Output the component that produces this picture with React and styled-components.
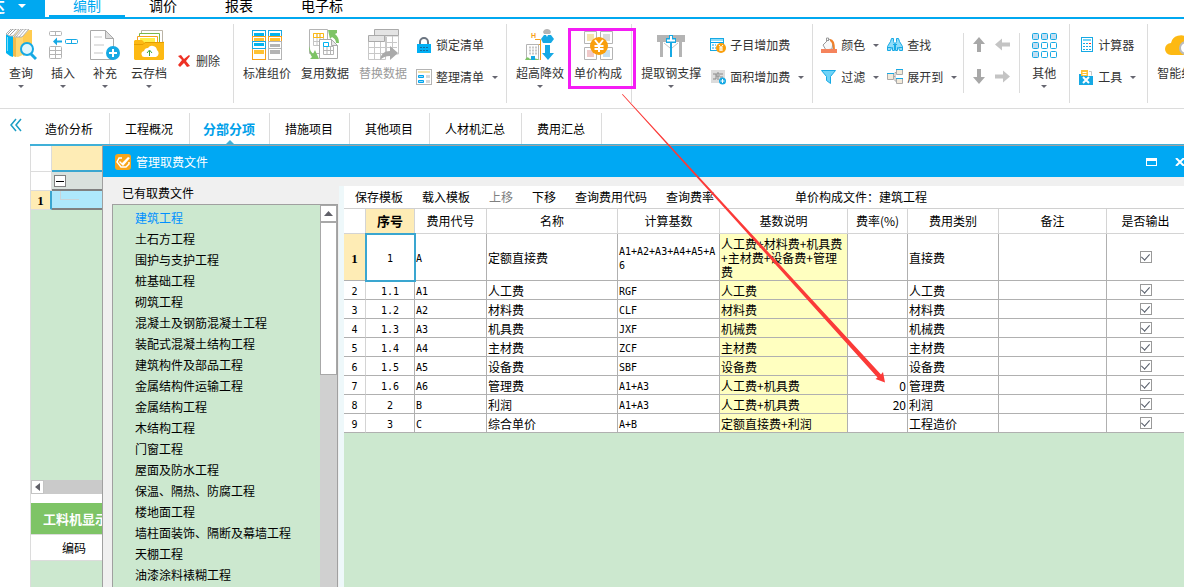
import React, { useState } from 'react'
import styled, { createGlobalStyle, css } from 'styled-components'

const feeFiles = [
  '建筑工程',
  '土石方工程',
  '围护与支护工程',
  '桩基础工程',
  '砌筑工程',
  '混凝土及钢筋混凝土工程',
  '装配式混凝土结构工程',
  '建筑构件及部品工程',
  '金属结构件运输工程',
  '金属结构工程',
  '木结构工程',
  '门窗工程',
  '屋面及防水工程',
  '保温、隔热、防腐工程',
  '楼地面工程',
  '墙柱面装饰、隔断及幕墙工程',
  '天棚工程',
  '油漆涂料裱糊工程',
]

const feeRows = [
  { no: '1', code: 'A', name: '定额直接费', base: 'A1+A2+A3+A4+A5+A6', desc: '人工费+材料费+机具费+主材费+设备费+管理费', rate: '', type: '直接费' },
  { no: '1.1', code: 'A1', name: '人工费', base: 'RGF', desc: '人工费', rate: '', type: '人工费' },
  { no: '1.2', code: 'A2', name: '材料费', base: 'CLF', desc: '材料费', rate: '', type: '材料费' },
  { no: '1.3', code: 'A3', name: '机具费', base: 'JXF', desc: '机械费', rate: '', type: '机械费' },
  { no: '1.4', code: 'A4', name: '主材费', base: 'ZCF', desc: '主材费', rate: '', type: '主材费' },
  { no: '1.5', code: 'A5', name: '设备费', base: 'SBF', desc: '设备费', rate: '', type: '设备费' },
  { no: '1.6', code: 'A6', name: '管理费', base: 'A1+A3', desc: '人工费+机具费', rate: '0', type: '管理费' },
  { no: '2', code: 'B', name: '利润', base: 'A1+A3', desc: '人工费+机具费', rate: '20', type: '利润' },
  { no: '3', code: 'C', name: '综合单价', base: 'A+B', desc: '定额直接费+利润', rate: '', type: '工程造价' },
]

const menus = ['编制', '调价', '报表', '电子标']
const tabs = ['造价分析', '工程概况', '分部分项', '措施项目', '其他项目', '人材机汇总', '费用汇总']

const icons = {
  search: (
    <>
      <path d="M1 5l4-1 3 3v21l-3-1-4-3z" fill="#00b4f0" />
      <path d="M2.500 8v14" stroke="#7fdcf8" />
      <path d="M1 5l5-5h8l-6 7h-3z" fill="#fff" stroke="#b0b0b0" />
      <path d="M3 5l5-5M5 6l6-6" stroke="#a0a0a0" />
      <path d="M8 8l6-7h13v21l-14 6-5-1z" fill="#ffd873" />
      <path d="M8 8l3 1v19l-3-1z" fill="#f0bb4d" />
      <path d="M18 7l7-6h2v21l-9 5z" fill="#ffcb4f" />
      <path d="M9 8l7-8h8l-7 8z" fill="#fff" stroke="#b0b0b0" />
      <path d="M11 8l7-8M14 8l7-8" stroke="#b0b0b0" />
      <circle cx="22" cy="20" r="6" fill="#e2f6fd" stroke="#16a9e4" strokeWidth="2" />
      <path d="M26 25l5 5" stroke="#16a9e4" strokeWidth="3" />
    </>
  ),
  insert: (
    <g fill="none" stroke="#b4b4b4">
      <rect x="2.500" y="2.500" width="12" height="4" rx="1" />
      <path d="M8.500 2.500v4" />
      <rect x="2.500" y="17.500" width="12" height="12" rx="1" />
      <path d="M8.500 17.500v12M2.500 21.500h12M2.500 25.500h12" />
      <rect x="18.500" y="10.500" width="12" height="4" rx="1" stroke="#16a9e4" />
      <path d="M24.500 10.500v4" stroke="#16a9e4" />
      <path d="M6 12.500l4-4v3h5v2h-5v3z" fill="#16a9e4" stroke="none" />
    </g>
  ),
  supplement: (
    <>
      <path d="M1.500 1.500h15l8 8v21h-23z" fill="#fff" stroke="#aaa" />
      <path d="M16.500 1.500v8h8z" fill="#ddd" stroke="#aaa" />
      <path d="M5 8h8M5 16h10M5 24h9" stroke="#e2e2e2" strokeWidth="2" />
      <circle cx="24" cy="24" r="7" fill="#16a9e4" />
      <path d="M24 20v8M20 24h8" stroke="#fff" strokeWidth="2" />
    </>
  ),
  archive: (
    <>
      <path d="M8.500 12v-10.500h21v12" fill="#fff" stroke="#bbb4a6" />
      <path d="M6.500 12v-7.500h20v10" fill="#fff" stroke="#7ab648" />
      <path d="M4.500 12v-4.500h20v8" fill="#fff" stroke="#f8a11b" />
      <path d="M7 9h15v5h-15z" fill="#fff04a" />
      <path d="M1 12l1-1h7l3 3h18l1-2v18l-1 1h-28l-1-1z" fill="#fdb913" />
      <path d="M1 15.500h9l2-2h19" stroke="#e59f00" fill="none" />
      <path d="M12 28h11a4 4 0 0 0 1-7a5 5 0 0 0-9-2a4 4 0 0 0-4 3a3 3 0 0 0 1 6z" fill="#fff" />
      <path d="M16.500 27v-5M14 24l2.500-3l2.500 3" stroke="#3da33d" fill="none" />
    </>
  ),
  remove: <path d="M2 3l3-1 3 4 5-4 1 1-4 5 4 5-3 1-3-4-4 4-2-2 4-5z" fill="#ee3124" />,
  standard: (
    <>
      <g fill="#fff">
        <rect x="1.500" y="1.500" width="13" height="7" stroke="#16a9e4" />
        <rect x="17.500" y="1.500" width="13" height="7" stroke="#16a9e4" />
        <rect x="1.500" y="7.500" width="13" height="6" stroke="#f8a11b" />
        <rect x="17.500" y="7.500" width="13" height="6" stroke="#f8a11b" />
        <rect x="1.500" y="18.500" width="13" height="12" stroke="#f8a11b" />
        <rect x="1.500" y="12.500" width="13" height="7" stroke="#16a9e4" />
        <rect x="17.500" y="12.500" width="13" height="18" stroke="#b4b4b4" />
      </g>
      <path d="M3 4h10v3h-10zM19 4h10v3h-10zM3 14h10v3h-10z" fill="#00b4f0" />
      <path d="M3 9h10v3h-10zM19 9h10v3h-10zM3 21h10v4h-10z" fill="#ffc233" />
      <path d="M19 15h10v3h-10zM19 21h10v4h-10z" fill="#b4b4b4" />
      <path d="M17.500 19.500h13" stroke="#b4b4b4" />
    </>
  ),
  reuse: (
    <>
      <path d="M.500.500h18v24h-18z" fill="#fff" stroke="#b4b4b4" />
      <path d="M4.500 4.500h10v12h-10zM8 4v12M11 4v12M4 8.500h10M4 12.500h10" fill="none" stroke="#c4c4c4" />
      <path d="M4.500 4.500h10v4h-10zM8 4v4M11 4v4" fill="none" stroke="#fdb913" />
      <path d="M10.500 10.500h12l6 6v13h-18z" fill="#fff" stroke="#aaa" />
      <path d="M22.500 10.500v6h6z" fill="#e8e8e8" stroke="#aaa" />
      <path d="M14.500 17.500h10v8h-10zM18 17v8M21.500 17v8M14 21.500h10" fill="none" stroke="#b4b4b4" />
      <path d="M14.500 13.500h5v4h-5z" fill="none" stroke="#00b4f0" />
      <path d="M19 1h9v3l-2 1q4 3 4 9h-3q0-4-4-6l-2 2z" fill="#7ec466" />
      <path d="M0 17q1 5 4 8l2-4 4 9h-9l2-2q-3-4-3-11z" fill="#7ec466" />
    </>
  ),
  replace: (
    <>
      <path d="M1.500 7.500h17v23h-17zM18 7h13.500v18h-12" fill="#fff" stroke="#c8c8c8" />
      <path d="M7.500 12v18M13.500 12v18M1 18.500h29M1 24.500h25M19.500 8v18M25.500 7v18M18 13.500h12" stroke="#c8c8c8" fill="none" />
      <path d="M7.500.500h24v6h-24z" fill="#e4e4e4" stroke="#aaa" />
      <path d="M1.500 6.500h16v6h-16z" fill="#e4e4e4" stroke="#aaa" />
      <path d="M13 31q1-9 10-9v-5l8 7-8 7v-4q-6 0-10 4z" fill="#aaa" />
    </>
  ),
  lock: (
    <>
      <path d="M4 7v-2a4 4 0 0 1 8 0v2" fill="none" stroke="#6b7480" strokeWidth="2" />
      <rect x="1" y="7" width="14" height="9" fill="#00b0f5" />
      <path d="M4 10.500h8M4 13.500h8" stroke="#176a9c" strokeDasharray="2 1" />
    </>
  ),
  tidy: (
    <>
      <rect x=".5" y=".5" width="15" height="15" fill="#fff" stroke="#b4b4b4" />
      <path d="M2 3h12" stroke="#f3e3ad" strokeWidth="2" />
      <path d="M2.500 6.500h5v2h-5zM2.500 11.500h5v2h-5z" fill="#8fdcf8" stroke="#00a3ee" />
      <path d="M10 6h4v3h-4zM10 11h4v3h-4z" fill="#d8d8d8" />
    </>
  ),
  height: (
    <>
      <text x="7" y="9" fontSize="7" fontWeight="700" fill="#f8a11b" fontFamily="Liberation Sans, sans-serif">H</text>
      <path d="M11 10.500h5.500v20.500M13 15.500h3" stroke="#f8a11b" fill="none" />
      <path d="M2.500 15.500h12v15h-12z" fill="#fff" stroke="#b4b4b4" />
      <path d="M5 18.500h8M5 21.500h8M5 24.500h8" stroke="#c8c8c8" strokeWidth="2" strokeDasharray="2 1" />
      <path d="M1 31q2-5 5-1 4-2 10 1z" fill="#7ec466" />
      <path d="M7 31v-4h4v4z" fill="#16a9e4" />
      <path d="M19 3q1-3 4-3t4 3l-1 2h-6z" fill="#b4b4b4" />
      <path d="M17 10l3-4h2l1 2 1-2h3l3 4-3 4h-8z" fill="#16a9e4" />
      <path d="M21 16h5v8h4l-6 7-6-7h3z" fill="#16a9e4" />
    </>
  ),
  price: (
    <>
      <g fill="#fff" stroke="#b4b4b4">
        <path d="M2.500 2.500h12v12h-12zM18.500 2.500h12v12h-12zM2.500 18.500h12v12h-12zM18.500 18.500h12v12h-12z" />
      </g>
      <path d="M5 5h7v7h-7z" fill="#f3e3ad" />
      <path d="M21 5h7v7h-7z" fill="#dadada" />
      <path d="M5 21h7v7h-7z" fill="#f0c9c9" />
      <path d="M21 21h7v7h-7z" fill="#c4dff2" />
      <circle cx="17" cy="17" r="9" fill="#f99f0c" />
      <path d="M13 11l4 5 4-5M17 16v7M12.500 17h9M12.500 20h9" fill="none" stroke="#fff" strokeWidth="2" />
    </>
  ),
  steel: (
    <>
      <path d="M2 6h28v7h-3v15h-3v-15h-16v15h-3v-15h-3z" fill="#b4b4b4" />
      <path d="M9 14l6 5M23 14l-6 5" stroke="#c4c4c4" />
      <path d="M11 9h3v-3h4v3h3v5h-4v14h-2v-14h-4z" fill="#16a9e4" />
      <path d="M12 10.500h8v2h-8zM15 7h2v4h-2z" fill="#fff" />
    </>
  ),
  subFee: (
    <>
      <rect x=".5" y="1.500" width="13" height="12" fill="#fff" stroke="#16a9e4" />
      <path d="M1 3h12" stroke="#8fdcf8" strokeWidth="2" />
      <path d="M2 8h4M2 11h4" stroke="#00a3ee" strokeDasharray="2 1" />
      <path d="M1 5.500h12" stroke="#00a3ee" />
      <circle cx="11" cy="11" r="5" fill="#f99f0c" />
      <path d="M9 8l2 2.500 2-2.500M11 10v4M9 11h4M9 13h4" stroke="#fff" fill="none" />
    </>
  ),
  areaFee: (
    <>
      <rect x="1" y="1" width="14" height="13" fill="#dcdcdc" />
      <path d="M3 5h3v5h-3M7 4h2v4h-2zM10 5h3M10 8h3M7 10h2" stroke="#8a8a8a" fill="none" />
      <circle cx="12.500" cy="12" r="3.500" fill="#16a9e4" />
      <path d="M12.500 10v4M10.500 12h4" stroke="#fff" />
    </>
  ),
  color: (
    <>
      <path d="M2 8l6-6 4 3-1 7-6 1z" fill="#f8f8f8" stroke="#9a9a9a" />
      <path d="M5.500 5v-4h2v3" fill="none" stroke="#9a9a9a" />
      <path d="M9 2q5 0 5 11h-2q0-7-3-9z" fill="#f0802a" />
      <path d="M0 12h16v4h-16z" fill="#f5835c" />
    </>
  ),
  filter: <path d="M.500 1.500h14l-5 6v7l-4-3v-4z" fill="#6fd3f7" stroke="#16a9e4" />,
  find: (
    <g stroke="#16a9e4" fill="#8fdcf8">
      <path d="M4.500 1.500h2v3l1 2v7h-2v-3h-1l-1 3h-3v-4l3-5z" />
      <path d="M11.500 1.500h-2v3l-1 2v7h2v-3h1l1 3h3v-4l-3-5z" />
      <path d="M6 7.500h4M1 10.500h3M12 10.500h3" />
    </g>
  ),
  expand: (
    <>
      <path d="M6 7.500h2v-4h2M8 7v5h2" fill="none" stroke="#aaa" />
      <path d="M.500 4.500h6v6h-6z" fill="#f3e9d9" stroke="#aaa" />
      <path d="M9.500.500h6v5h-6zM9.500 9.500h6v5h-6z" fill="#f3e9d9" stroke="#aaa" />
      <path d="M0 4.500h7M9 .500h7M9 9.500h7" stroke="#16a9e4" />
    </>
  ),
  up: <path d="M8 0l6 7h-4v8h-4v-8h-4z" fill="#a8a8a8" />,
  down: <path d="M8 15l6-7h-4v-8h-4v8h-4z" fill="#a8a8a8" />,
  left: <path d="M0 7.500l7-6v4h8v4h-8v4z" fill="#c4c4c4" />,
  right: <path d="M15 7.500l-7-6v4h-8v4h8v4z" fill="#c4c4c4" />,
  other: (
    <g stroke="#16a9e4">
      {[4, 13, 22].map((y, r) =>
        [4, 13, 22].map((x, c) => (
          <rect key={x + y * 100} x={x + 0.5} y={y + 0.5} width="6" height="6" rx="1" fill={r === 0 || c === 0 ? '#c4dff2' : '#fff'} />
        ))
      )}
    </g>
  ),
  calc: (
    <>
      <rect x="3.500" y=".5" width="11" height="14" fill="#fff" stroke="#16a9e4" />
      <path d="M5 3h8" stroke="#6fd3f7" strokeWidth="2" />
      <path d="M5 6.500h8M5 9.500h8M5 12.500h8" stroke="#16a9e4" strokeDasharray="2 1" />
      <path d="M11 6.500h2" stroke="#ee3124" />
    </>
  ),
  tool: (
    <>
      <path d="M3 1h7v6h-7z" fill="#ffc233" />
      <path d="M4.500 3.500h4M4.500 5.500h4" stroke="#fff" />
      <path d="M11 2.500h2.500v4" fill="#fff" stroke="#c8c8c8" />
      <path d="M1 5h2v2h12v9h-14z" fill="#16a9e4" />
      <path d="M5 8l6 6M11 8l-6 6" stroke="#fff" strokeWidth="2" />
    </>
  ),
  cloud: (
    <>
      <path d="M6 26a6 6 0 0 1 0-12a10 9 0 0 1 17-5a8 8 0 0 1 9 9a5 5 0 0 1-4 8z" fill="#fdb913" />
      <circle cx="21" cy="19" r="6" fill="#fff" stroke="#bbb" strokeWidth="2" />
    </>
  ),
}

const groups = [
  {
    pad: '0 9px 0 0',
    items: [
      { big: true, icon: 'search', label: '查询', caret: true },
      { big: true, icon: 'insert', label: '插入', caret: true },
      { big: true, icon: 'supplement', label: '补充', caret: true },
      { big: true, icon: 'archive', label: '云存档', caret: true },
      { stack: [{ icon: 'remove', label: '删除' }] },
    ],
  },
  {
    items: [
      { big: true, icon: 'standard', label: '标准组价' },
      { big: true, icon: 'reuse', label: '复用数据' },
      { big: true, icon: 'replace', label: '替换数据', disabled: true },
      { stack: [{ icon: 'lock', label: '锁定清单' }, { icon: 'tidy', label: '整理清单', caret: true }] },
    ],
  },
  {
    items: [
      { big: true, icon: 'height', label: '超高降效', caret: true },
      { big: true, icon: 'price', label: '单价构成' },
    ],
  },
  {
    items: [
      { big: true, icon: 'steel', label: '提取钢支撑', caret: true },
      { stack: [{ icon: 'subFee', label: '子目增加费' }, { icon: 'areaFee', label: '面积增加费', caret: true }] },
    ],
  },
  {
    pad: '0 2px 0 4px',
    short: true,
    items: [
      { stack: [{ icon: 'color', label: '颜色', caret: true }, { icon: 'filter', label: '过滤', caret: true }] },
      { stack: [{ icon: 'find', label: '查找' }, { icon: 'expand', label: '展开到', caret: true }] },
    ],
  },
  {
    pad: '0 4px 0 3px',
    short: true,
    items: [
      { stack: [{ icon: 'up', aria: '上移' }, { icon: 'down', aria: '下移' }] },
      { stack: [{ icon: 'left', aria: '升级' }, { icon: 'right', aria: '降级' }] },
    ],
  },
  { pad: '0 4px 0 3px', items: [{ big: true, icon: 'other', label: '其他', caret: true }] },
  {
    pad: '0 7px 0 4px',
    items: [{ stack: [{ icon: 'calc', label: '计算器' }, { icon: 'tool', label: '工具', caret: true }] }],
  },
  { items: [{ big: true, icon: 'cloud', label: '智能组价' }] },
]

function Icon({ name, size }) {
  return (
    <svg width={size} height={size} viewBox={`0 0 ${size} ${size}`} aria-hidden="true">
      {icons[name]}
    </svg>
  )
}

function RibbonItem({ item }) {
  if (item.big) {
    return (
      <BigButton type="button" disabled={item.disabled}>
        <Icon name={item.icon} size={32} />
        <span>{item.label}</span>
        {item.caret && <Caret />}
      </BigButton>
    )
  }
  return (
    <Stack>
      {item.stack.map((b) => (
        <SmallButton type="button" key={b.icon} aria-label={b.aria}>
          <Icon name={b.icon} size={16} />
          {b.label && <span>{b.label}</span>}
          {b.caret && <SideCaret />}
        </SmallButton>
      ))}
    </Stack>
  )
}

export default function App() {
  const [menu, setMenu] = useState('编制')
  const [tab, setTab] = useState('分部分项')
  const [file, setFile] = useState('建筑工程')

  return (
    <Page>
      <GlobalStyle />
      <MenuBar>
        <AppButton type="button">
          <span>达</span>
          <MenuCaret />
        </AppButton>
        {menus.map((m) => (
          <MenuItem type="button" key={m} $active={m === menu} onClick={() => setMenu(m)}>
            {m}
          </MenuItem>
        ))}
      </MenuBar>

      <Ribbon>
        {groups.map((g, i) => (
          <React.Fragment key={i}>
            <Group $pad={g.pad}>
              {g.items.map((item, k) => (
                <RibbonItem key={k} item={item} />
              ))}
            </Group>
            {i < groups.length - 1 && <Divider $short={g.short} />}
          </React.Fragment>
        ))}
      </Ribbon>

      <Workspace>
        <Gutter>
          <FoldButton type="button" aria-label="收起">
            <svg width="12" height="14" viewBox="0 0 12 14">
              <path d="M6 1L1 7l5 6M11 1L6 7l5 6" fill="none" stroke="#1a9ec4" strokeWidth="1.500" />
            </svg>
          </FoldButton>
        </Gutter>
        <Main>
          <TabBar>
            {tabs.map((t) => (
              <Tab type="button" key={t} $active={t === tab} onClick={() => setTab(t)}>
                {t}
              </Tab>
            ))}
          </TabBar>
          <Content>
            <BackPanel>
              <BackHead>
                <BackIndex />
                <BackHeadCell />
              </BackHead>
              <BackRow>
                <BackIndex />
                <BackTree>
                  <Expander type="button" aria-label="折叠" />
                </BackTree>
              </BackRow>
              <BackRow>
                <BackIndex $active>1</BackIndex>
                <BackCurrent />
              </BackRow>
              <BackEmpty />
              <HScroll>
                <ScrollButton type="button" aria-label="向左">
                  <svg width="5" height="8" viewBox="0 0 5 8">
                    <path d="M5 0v8L0 4z" fill="#606068" />
                  </svg>
                </ScrollButton>
              </HScroll>
              <DetailTitle>工料机显示</DetailTitle>
              <DetailHead>编码</DetailHead>
              <DetailBody />
            </BackPanel>

            <Dialog>
              <TitleBar>
                <svg width="16" height="16" viewBox="0 0 16 16">
                  <rect width="16" height="16" rx="3" fill="#f9a51a" />
                  <path d="M7 4H4L2 8l4 5h5l3-3V8" fill="none" stroke="#fff" strokeWidth="1.500" />
                  <path d="M5 7l2 2 6-6 2 1-7 8-4-4z" fill="#fff" />
                </svg>
                <h1>管理取费文件</h1>
                <WindowButton type="button" aria-label="最大化">
                  <svg width="11" height="8" viewBox="0 0 11 8">
                    <path d="M0 0h11v8H0zM1 3v4h9V3z" fill="#fff" fillRule="evenodd" />
                  </svg>
                </WindowButton>
                <WindowButton type="button" aria-label="关闭">
                  <svg width="10" height="8" viewBox="0 0 10 8">
                    <path d="M1 0l8 8M9 0L1 8" stroke="#fff" strokeWidth="2" />
                  </svg>
                </WindowButton>
              </TitleBar>
              <DialogBody>
                <FilePanel>
                  <h2>已有取费文件</h2>
                  <FileBox>
                    <FileList>
                      {feeFiles.map((f) => (
                        <li key={f}>
                          <FileItem type="button" $active={f === file} onClick={() => setFile(f)}>
                            {f}
                          </FileItem>
                        </li>
                      ))}
                    </FileList>
                    <VScroll>
                      <VScrollButton type="button" aria-label="向上">
                        <svg width="9" height="5" viewBox="0 0 9 5">
                          <path d="M0 5h9L4.500 0z" fill="#606068" />
                        </svg>
                      </VScrollButton>
                      <VThumb />
                    </VScroll>
                  </FileBox>
                </FilePanel>
                <Splitter />
                <FeePanel>
                  <Toolbar>
                    <ToolLink type="button">保存模板</ToolLink>
                    <ToolLink type="button">载入模板</ToolLink>
                    <ToolLink type="button" disabled>上移</ToolLink>
                    <ToolLink type="button">下移</ToolLink>
                    <ToolLink type="button">查询费用代码</ToolLink>
                    <ToolLink type="button">查询费率</ToolLink>
                    <CurrentFile>单价构成文件：{file}</CurrentFile>
                  </Toolbar>
                  <FeeTable>
                    <colgroup>
                      <Col $w={22} />
                      <Col $w={49} />
                      <Col $w={72} />
                      <Col $w={131} />
                      <Col $w={102} />
                      <Col $w={128} />
                      <Col $w={60} />
                      <Col $w={91} />
                      <Col />
                      <Col $w={77} />
                    </colgroup>
                    <thead>
                      <tr>
                        <Th />
                        <Th $active>序号</Th>
                        <Th>费用代号</Th>
                        <Th>名称</Th>
                        <Th>计算基数</Th>
                        <Th>基数说明</Th>
                        <Th>费率(%)</Th>
                        <Th>费用类别</Th>
                        <Th>备注</Th>
                        <Th>是否输出</Th>
                      </tr>
                    </thead>
                    <tbody>
                      {feeRows.map((r, i) => (
                        <Tr key={r.code} $tall={i === 0}>
                          <IndexTd $active={i === 0}>{i + 1}</IndexTd>
                          <NoTd $active={i === 0}>{r.no}</NoTd>
                          <CodeTd>{r.code}</CodeTd>
                          <Td>{r.name}</Td>
                          <CodeTd>{r.base}</CodeTd>
                          <DescTd>{r.desc}</DescTd>
                          <RateTd>{r.rate}</RateTd>
                          <Td>{r.type}</Td>
                          <Td />
                          <CheckTd>
                            <Check type="checkbox" defaultChecked aria-label={`${r.name} 是否输出`} />
                          </CheckTd>
                        </Tr>
                      ))}
                    </tbody>
                  </FeeTable>
                </FeePanel>
              </DialogBody>
            </Dialog>
          </Content>
        </Main>
      </Workspace>

      <Marks width="340" height="370" viewBox="560 20 340 370" aria-hidden="true">
        <rect x="569.500" y="29.500" width="65" height="58" fill="none" stroke="#f41cf4" strokeWidth="3" />
        <path d="M622 94.500L877.500 377.500L875.500 379L885 382.500L883 372L881 374.500L622.600 94z" fill="#fb3a38" />
      </Marks>
    </Page>
  )
}

const GlobalStyle = createGlobalStyle`
  * {
    box-sizing: border-box;
  }
  body {
    margin: 0;
    background: #fff;
    color: #000;
    font-family: 'Noto Sans CJK SC', sans-serif;
    font-size: 12px;
    line-height: 16px;
  }
  button {
    margin: 0;
    padding: 0;
    border: 0;
    background: none;
    color: inherit;
    font: inherit;
    white-space: nowrap;
  }
  h1, h2, ul {
    margin: 0;
    padding: 0;
    font-size: 12px;
    font-weight: 400;
    list-style: none;
  }
  svg {
    display: block;
    flex: none;
  }
`

const Page = styled.div`
  position: relative;
  display: flex;
  flex-direction: column;
  height: 100vh;
  overflow: hidden;
`

const MenuBar = styled.nav`
  display: flex;
  flex: none;
  height: 19px;
  overflow: hidden;
  border-bottom: 2px solid #00a8f0;
  font-size: 14px;
  line-height: 10px;
`

const AppButton = styled.button`
  display: flex;
  justify-content: flex-end;
  gap: 13px;
  width: 45px;
  margin-right: 4px;
  padding-right: 19px;
  background: #00a8f0;
  color: #fff;
  font-size: 18px;
  font-weight: 500;
`

const MenuCaret = styled.i`
  flex: none;
  align-self: flex-start;
  margin-top: 4px;
  border: 4px solid transparent;
  border-top-color: #fff;
  border-bottom: 0;
`

const MenuItem = styled.button`
  display: flex;
  align-items: flex-start;
  padding: 0 24px;
  border-bottom: 2px solid transparent;
  ${(p) => p.$active && css`
    border-color: #00a8f0;
    color: #00a8f0;
  `}
`

const Ribbon = styled.div`
  display: flex;
  flex: none;
  align-items: flex-start;
  padding: 5px 0 6px;
  height: 90px;
  border-bottom: 1px solid #dcdcdc;
  color: #333;
`

const Group = styled.div`
  display: flex;
  flex: none;
  margin-top: 5px;
  padding: ${(p) => p.$pad || '0 4px'};
`

const Divider = styled.div`
  flex: none;
  width: 1px;
  height: ${(p) => (p.$short ? 60 : 79)}px;
  margin-top: ${(p) => (p.$short ? 9 : 0)}px;
  background: #dcdcdc;
`

const BigButton = styled.button`
  display: flex;
  flex-direction: column;
  align-items: center;
  gap: 4px;
  min-width: 42px;
  padding: 0 5px;
  &:disabled {
    color: #9a9a9a;
  }
`

const Caret = styled.i`
  border: 3px solid transparent;
  border-top-color: #666670;
  border-bottom: 0;
`

const SideCaret = styled(Caret)`
  margin-left: 4px;
`

const Stack = styled.div`
  display: flex;
  flex-direction: column;
  justify-content: center;
  height: 64px;
`

const SmallButton = styled.button`
  display: flex;
  align-items: center;
  gap: 4px;
  height: 32px;
  padding: 0 4px;
`

const Workspace = styled.div`
  display: flex;
  flex: 1;
  min-height: 0;
`

const Gutter = styled.div`
  flex: none;
  width: 30px;
  padding: 9px 0 0 10px;
`

const FoldButton = styled.button`
  display: block;
`

const Main = styled.main`
  display: flex;
  flex: 1;
  flex-direction: column;
  min-width: 0;
`

const TabBar = styled.div`
  display: flex;
  flex: none;
  height: 37px;
  padding-top: 4px;
  border-bottom: 2px solid #40b0d8;
`

const Tab = styled.button`
  position: relative;
  padding: 0 16px 0 15px;
  border-right: 1px solid #dcdcdc;
  ${(p) => p.$active && css`
    padding: 0 14px 0 13px;
    color: #00a0e9;
    font-size: 13px;
    font-weight: 700;
    &::after {
      content: '';
      position: absolute;
      bottom: 0;
      left: 50%;
      margin-left: -4px;
      border: 4px solid transparent;
      border-bottom-color: #40b0d8;
      border-top: 0;
    }
  `}
`

const Content = styled.div`
  display: flex;
  flex: 1;
  min-height: 0;
`

const BackPanel = styled.section`
  display: flex;
  flex: none;
  flex-direction: column;
  width: 72px;
  overflow: hidden;
  border-left: 1px solid #dcdcdc;
`

const BackHead = styled.div`
  display: flex;
  flex: none;
  height: 26px;
`

const BackHeadCell = styled.div`
  flex: 1;
  background: #feecb5;
  border-bottom: 2px solid #3aa6d0;
`

const BackRow = styled.div`
  display: flex;
  flex: none;
  height: 19px;
`

const BackIndex = styled.div`
  flex: none;
  width: 21px;
  border-right: 1px solid #dcdcdc;
  border-bottom: 1px solid #dcdcdc;
  text-align: center;
  ${(p) => p.$active && css`
    border-right: 2px solid #3aa6d0;
    background: #feecb5;
    font: 700 13px/19px 'Liberation Serif', serif;
  `}
`

const BackTree = styled.div`
  flex: 1;
  padding: 3px 2px;
  background: #d9e1dd;
  border-bottom: 2px solid #808080;
`

const Expander = styled.button`
  display: flex;
  align-items: center;
  justify-content: center;
  width: 12px;
  height: 12px;
  border: 1px solid #808080;
  background: #fff;
  &::after {
    content: '';
    width: 8px;
    height: 1px;
    background: #000;
  }
`

const BackCurrent = styled.div`
  flex: 1;
  border-bottom: 2px solid #808080;
  background: #aee8fc;
  &::before {
    content: '';
    display: block;
    width: 18px;
    height: 8px;
    margin-left: 8px;
    border-left: 1px solid #c8d4d8;
    border-bottom: 1px solid #c8d4d8;
  }
`

const BackEmpty = styled.div`
  flex: 1;
  background: #cce8cf;
`

const HScroll = styled.div`
  flex: none;
  height: 14px;
  margin-bottom: 9px;
  background: #cacaca;
`

const ScrollButton = styled.button`
  display: flex;
  align-items: center;
  justify-content: center;
  width: 13px;
  height: 14px;
  border: 1px solid #c4c4c4;
  background: #fff;
`

const DetailTitle = styled.h2`
  flex: none;
  height: 31px;
  padding-left: 12px;
  background: #7ec466;
  color: #fff;
  font-size: 13px;
  font-weight: 700;
  line-height: 31px;
  white-space: nowrap;
`

const DetailHead = styled.div`
  flex: none;
  height: 27px;
  padding-left: 31px;
  border-top: 1px solid #dcdcdc;
  border-bottom: 1px solid #dcdcdc;
  line-height: 25px;
`

const DetailBody = styled.div`
  flex: none;
  height: 26px;
  background: #cce8cf;
`

const Dialog = styled.section`
  display: flex;
  flex: 1;
  flex-direction: column;
  min-width: 0;
  margin-top: -1px;
  border: 1px solid #a0a0a0;
  border-width: 1px 0 0 1px;
  background: #f0f0f0;
`

const TitleBar = styled.header`
  display: flex;
  flex: none;
  align-items: center;
  height: 31px;
  padding-left: 12px;
  overflow: hidden;
  background: #00a8f3;
  color: #fff;
  h1 {
    flex: 1;
    margin-left: 5px;
  }
`

const WindowButton = styled.button`
  width: 29px;
  flex: none;
  & + & {
    width: 9px;
  }
`

const DialogBody = styled.div`
  display: flex;
  flex: 1;
  min-height: 0;
  padding-top: 9px;
`

const FilePanel = styled.div`
  display: flex;
  flex: none;
  flex-direction: column;
  width: 236px;
  padding: 0 1px 0 9px;
  h2 {
    flex: none;
    height: 18px;
    padding-left: 10px;
    line-height: 14px;
  }
`

const FileBox = styled.div`
  display: flex;
  flex: 1;
  min-height: 0;
  border: 1px solid #a0a0a0;
  border-bottom: 0;
  background: #cce8cf;
`

const FileList = styled.ul`
  flex: 1;
  padding-top: 2px;
  overflow: hidden;
`

const FileItem = styled.button`
  display: block;
  width: 100%;
  height: 21px;
  padding-left: 22px;
  color: ${(p) => (p.$active ? '#0090ff' : '#000')};
  text-align: left;
`

const VScroll = styled.div`
  flex: none;
  width: 17px;
  background: #d0d0d0;
`

const VScrollButton = styled.button`
  display: flex;
  align-items: center;
  justify-content: center;
  width: 100%;
  height: 17px;
  border: 1px solid #a8a8a8;
  background: #fff;
`

const VThumb = styled.div`
  height: 153px;
  border: 1px solid #a8a8a8;
  background: #fff;
`

const Splitter = styled.div`
  flex: none;
  width: 5px;
  background: #eef8fa;
`

const FeePanel = styled.div`
  flex: 1;
  min-width: 0;
  background: #cce8cf;
`

const Toolbar = styled.div`
  display: flex;
  gap: 19px;
  height: 23px;
  padding-left: 11px;
  overflow: hidden;
  border-bottom: 1px solid #d0d0d0;
  background: #fff;
  white-space: nowrap;
  line-height: 22px;
`

const ToolLink = styled.button`
  &:disabled {
    color: #808080;
  }
`

const CurrentFile = styled.span`
  margin-left: 62px;
`

const FeeTable = styled.table`
  width: 100%;
  table-layout: fixed;
  border-spacing: 0;
  background: #fff;
`

const Col = styled.col`
  ${(p) => p.$w && css`width: ${p.$w}px;`}
`

const Th = styled.th`
  height: 25px;
  padding: 0;
  border: 1px solid #d4d4d4;
  border-width: 0 1px 1px 0;
  font-weight: 400;
  &:last-child {
    border-right: 0;
  }
  ${(p) => p.$active && css`
    background: #feecb5;
    font-size: 13px;
    font-weight: 700;
  `}
`

const Tr = styled.tr`
  height: ${(p) => (p.$tall ? 47 : 19)}px;
`

const Td = styled.td`
  padding: 2px 1px 0;
  border: 1px solid #b0b0b0;
  border-width: 0 1px 1px 0;
  line-height: 14px;
  word-break: break-all;
`

const CodeTd = styled(Td)`
  padding-top: 3px;
  font-family: 'DejaVu Sans Mono', monospace;
  font-size: 10px;
`

const IndexTd = styled(CodeTd)`
  border-right-color: #d4d4d4;
  text-align: center;
  ${(p) => p.$active && css`
    background: #feecb5;
    font: 700 13px/14px 'Liberation Serif', serif;
  `}
`

const NoTd = styled(CodeTd)`
  text-align: center;
  ${(p) => p.$active && css`
    outline: 2px solid #3aa6d0;
    outline-offset: -1px;
  `}
`

const DescTd = styled(Td)`
  background: #ffffc0;
`

const RateTd = styled(Td)`
  text-align: right;
`

const CheckTd = styled(Td)`
  padding: 0 0 2px;
  border-right: 0;
  text-align: center;
`

const Check = styled.input`
  display: inline-flex;
  align-items: flex-start;
  justify-content: center;
  width: 12px;
  height: 12px;
  margin: 0;
  border: 1px solid #999;
  background: #fff;
  appearance: none;
  vertical-align: middle;
  &:checked::after {
    content: '';
    width: 4px;
    height: 7px;
    border: solid #555c68;
    border-width: 0 1px 1px 0;
    transform: rotate(42deg);
  }
`

/* callout frame and arrow drawn over the window */
const Marks = styled.svg`
  position: absolute;
  top: 20px;
  left: 560px;
  pointer-events: none;
`
